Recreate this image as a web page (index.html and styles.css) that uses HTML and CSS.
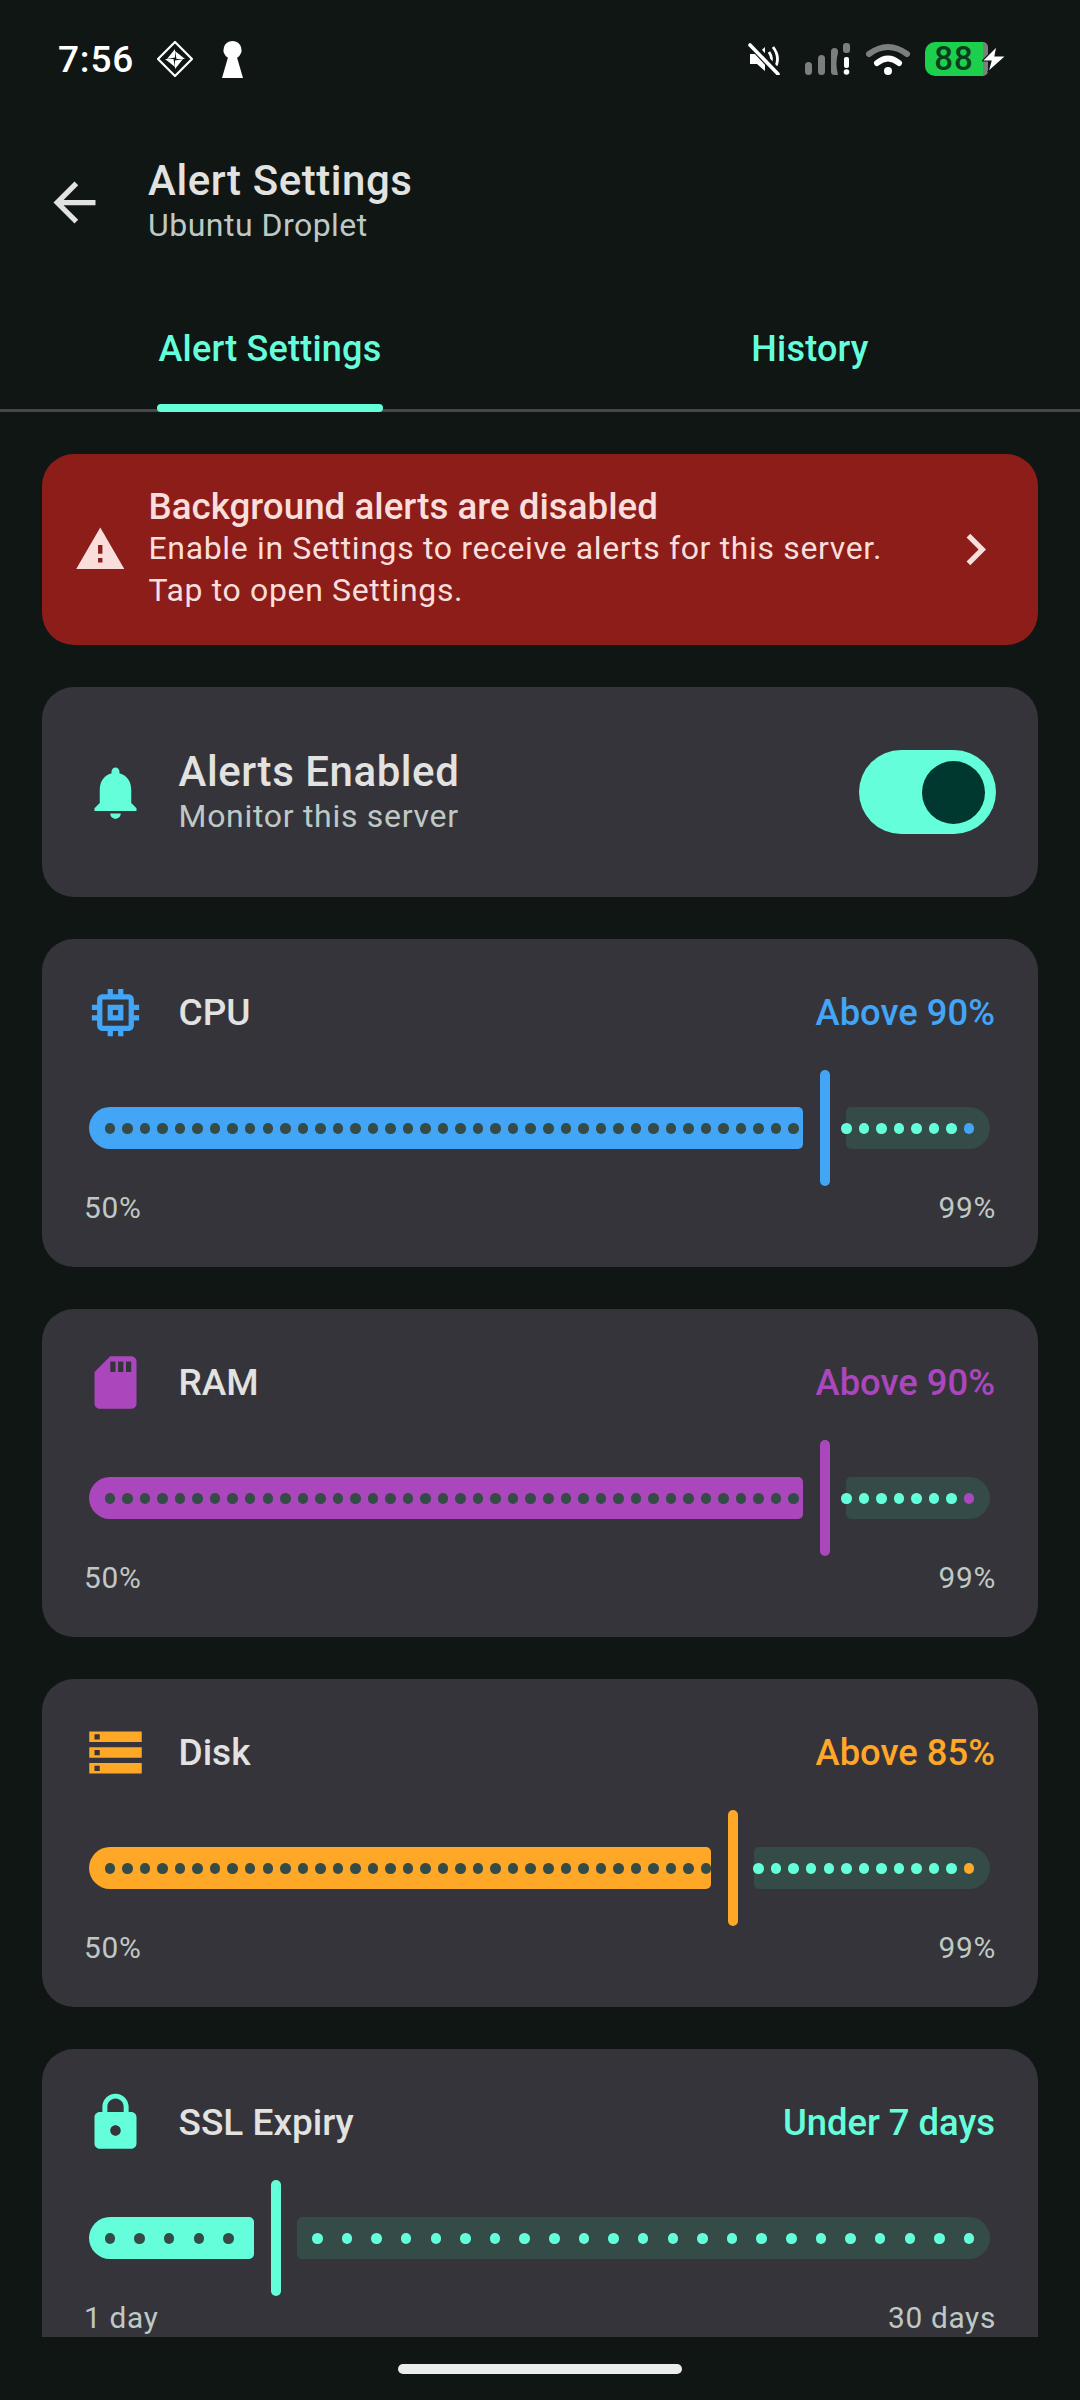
FILE: index.html
```html
<!DOCTYPE html>
<html lang="en">

<head>
    <meta charset="UTF-8">
    <meta name="viewport" content="width=device-width, initial-scale=1.0">
    <title>Alert Settings</title>
    <link rel="stylesheet" href="styles.css">
</head>

<body>
    <!-- Status bar -->
    <div class="status-bar">
        <div class="status-left">
            <span class="clock">7:56</span>
            <svg class="diamond-icon" viewBox="0 0 38 38">
                <path d="M19 2 36 19 19 36 2 19Z" fill="none" stroke="#fff" stroke-width="2.2" stroke-linejoin="round" />
                <path d="M19 9v8.5l-8 1.5zM29 19h-8.5l-1.5-8zM19 29v-8.5l8-1.5zM9 19h8.5l1.5 8z" fill="#fff" />
            </svg>
            <svg class="key-icon" viewBox="0 0 21 37">
                <path d="M10.5 0a9 9 0 0 1 4.6 16.7L21 37H0L5.9 16.7A9 9 0 0 1 10.5 0Z" fill="#fff" />
            </svg>
        </div>
        <div class="status-right">
            <svg class="mute-icon" viewBox="0 0 32 32">
                <path d="M2 11h7l8-7v24l-8-7H2z" fill="#fff" />
                <path d="M21 9q5 7 0 14M25 4q9 12 0 24" fill="none" stroke="#fff" stroke-width="2.8" />
                <path d="M2 0 31 31" stroke="#0f1614" stroke-width="8" />
                <path d="M2 2 30 31" stroke="#fff" stroke-width="3.6" stroke-linecap="round" />
            </svg>
            <svg class="signal-icon" viewBox="0 0 46 32">
                <rect x="0" y="19" width="7" height="13" rx="3.5" fill="#7b7f7e" />
                <rect x="13" y="12" width="7" height="20" rx="3.5" fill="#7b7f7e" />
                <path d="M26 8.5a3.5 3.5 0 0 1 7 0V10q-3 10 0 22h-3.5a3.5 3.5 0 0 1-3.5-3.5z" fill="#7b7f7e" />
                <rect x="38" y="0" width="7" height="10" rx="3" fill="#7b7f7e" />
                <rect x="39" y="14" width="5" height="11" rx="2" fill="#fff" />
                <circle cx="41.5" cy="29" r="2.8" fill="#fff" />
            </svg>
            <svg class="wifi-icon" viewBox="0 0 44 32">
                <path d="M3 11Q22-3 41 11" fill="none" stroke="#7b7f7e" stroke-width="6" stroke-linecap="round" />
                <path d="M11 20Q22 11 33 20" fill="none" stroke="#fff" stroke-width="6" stroke-linecap="round" />
                <circle cx="22" cy="28" r="4" fill="#fff" />
            </svg>
            <div class="battery">
                <span class="battery-level">88</span>
                <span class="battery-cap"></span>
                <svg class="bolt-icon" viewBox="0 0 24 26">
                    <path d="M15 0 0 15h9L6 26l18-16H13z" fill="#fff" stroke="#0f1614" stroke-width="1.2" />
                </svg>
            </div>
        </div>
    </div>

    <!-- Top bar -->
    <div class="app-bar">
        <svg class="back-icon" viewBox="0 0 24 24">
            <path d="M20 11H7.83l5.59-5.59L12 4l-8 8 8 8 1.41-1.41L7.83 13H20v-2z" />
        </svg>
        <div class="app-text">
            <div class="app-title">Alert Settings</div>
            <div class="app-subtitle">Ubuntu Droplet</div>
        </div>
    </div>

    <div class="tabs">
        <div class="tab"><span class="tab-label selected">Alert Settings</span></div>
        <div class="tab"><span class="tab-label">History</span></div>
    </div>

    <div class="content">
        <!-- Warning banner -->
        <div class="banner">
            <svg class="banner-icon" viewBox="0 0 24 24">
                <path d="M1 21h22L12 2 1 21zm12-3h-2v-2h2v2zm0-4h-2v-4h2v4z" />
            </svg>
            <div class="banner-text">
                <div class="banner-title">Background alerts are disabled</div>
                <div class="banner-body">Enable in Settings to receive alerts for this server.<br>Tap to open Settings.</div>
            </div>
            <svg class="chevron-icon" viewBox="0 0 24 24">
                <path d="M10 6L8.59 7.41 13.17 12l-4.58 4.59L10 18l6-6z" />
            </svg>
        </div>

        <!-- Master switch -->
        <div class="card switch-card teal">
            <svg class="card-icon" viewBox="0 0 24 24">
                <path d="M12 22c1.1 0 2-.9 2-2h-4c0 1.1.89 2 2 2zm6-6v-5c0-3.07-1.64-5.64-4.5-6.32V4c0-.83-.67-1.5-1.5-1.5s-1.5.67-1.5 1.5v.68C7.63 5.36 6 7.92 6 11v5l-2 2v1h16v-1l-2-2z" />
            </svg>
            <div class="switch-text">
                <div class="switch-title">Alerts Enabled</div>
                <div class="switch-sub">Monitor this server</div>
            </div>
            <div class="switch"><span class="switch-thumb"></span></div>
        </div>

        <!-- Thresholds -->
        <div class="card metric blue">
            <div class="metric-head">
                <svg class="card-icon" viewBox="0 0 24 24">
                    <path d="M15 9H9v6h6V9zm-2 4h-2v-2h2v2zm8-2V9h-2V7c0-1.1-.9-2-2-2h-2V3h-2v2h-2V3H9v2H7c-1.1 0-2 .9-2 2v2H3v2h2v2H3v2h2v2c0 1.1.9 2 2 2h2v2h2v-2h2v2h2v-2h2c1.1 0 2-.9 2-2v-2h2v-2h-2v-2h2zm-4 6H7V7h10v10z" />
                </svg>
                <span class="metric-name">CPU</span>
                <span class="metric-value">Above 90%</span>
            </div>
            <div class="slider" data-min="50" data-max="99" data-value="90"></div>
            <div class="range"><span>50%</span><span>99%</span></div>
        </div>

        <div class="card metric purple">
            <div class="metric-head">
                <svg class="card-icon" viewBox="0 0 24 24">
                    <path d="M18 2h-8L4.02 8 4 20c0 1.1.9 2 2 2h12c1.1 0 2-.9 2-2V4c0-1.1-.9-2-2-2zm-6 6h-2V4h2v4zm3 0h-2V4h2v4zm3 0h-2V4h2v4z" />
                </svg>
                <span class="metric-name">RAM</span>
                <span class="metric-value">Above 90%</span>
            </div>
            <div class="slider" data-min="50" data-max="99" data-value="90"></div>
            <div class="range"><span>50%</span><span>99%</span></div>
        </div>

        <div class="card metric orange">
            <div class="metric-head">
                <svg class="card-icon" viewBox="0 0 24 24">
                    <path d="M2 20h20v-4H2v4zm2-3h2v2H4v-2zM2 4v4h20V4H2zm4 3H4V5h2v2zm-4 7h20v-4H2v4zm2-3h2v2H4v-2z" />
                </svg>
                <span class="metric-name">Disk</span>
                <span class="metric-value">Above 85%</span>
            </div>
            <div class="slider" data-min="50" data-max="99" data-value="85"></div>
            <div class="range"><span>50%</span><span>99%</span></div>
        </div>

        <div class="card metric teal">
            <div class="metric-head">
                <svg class="card-icon" viewBox="0 0 24 24">
                    <path d="M18 8h-1V6c0-2.76-2.24-5-5-5S7 3.24 7 6v2H6c-1.1 0-2 .9-2 2v10c0 1.1.9 2 2 2h12c1.1 0 2-.9 2-2V10c0-1.1-.9-2-2-2zm-6 9c-1.1 0-2-.9-2-2s.9-2 2-2 2 .9 2 2-.9 2-2 2zm3.1-9H8.9V6c0-1.71 1.39-3.1 3.1-3.1 1.71 0 3.1 1.39 3.1 3.1v2z" />
                </svg>
                <span class="metric-name">SSL Expiry</span>
                <span class="metric-value">Under 7 days</span>
            </div>
            <div class="slider" data-min="1" data-max="30" data-value="7"></div>
            <div class="range"><span>1 day</span><span>30 days</span></div>
        </div>
    </div>

    <div class="home-area"><span class="home-bar"></span></div>

    <script src="slider.js"></script>
</body>

</html>
```
FILE: styles.css
```css
/* General Styles */
* {
    box-sizing: border-box;
}

body {
    font-family: Roboto, 'Noto Sans', sans-serif;
    background: #0f1614;
    color: #e2e3e0;
    margin: 0;
    width: 1080px;
    height: 2400px;
    overflow: hidden;
    display: flex;
    flex-direction: column;
}

/* Status bar */
.status-bar {
    height: 118px;
    flex: none;
    display: flex;
    justify-content: space-between;
    align-items: center;
    padding: 0 92px 0 58px;
    color: #fff;
}

.status-left,
.status-right {
    display: flex;
    align-items: center;
}

.clock {
    font-size: 37px;
    font-weight: 500;
    letter-spacing: 0.8px;
    width: 98px;
}

.diamond-icon {
    width: 38px;
    height: 38px;
    margin-right: 28px;
}

.key-icon {
    width: 21px;
    height: 37px;
}

.mute-icon {
    width: 32px;
    height: 32px;
    margin-right: 25px;
}

.signal-icon {
    width: 46px;
    height: 32px;
    margin-right: 15px;
}

.wifi-icon {
    width: 44px;
    height: 32px;
    margin-right: 15px;
}

.battery {
    display: flex;
    align-items: center;
    position: relative;
}

.battery-level {
    width: 58px;
    height: 34px;
    background: #1ccf4c;
    border-radius: 10px 0 0 10px;
    color: #0b3d1c;
    font-size: 33px;
    font-weight: 500;
    line-height: 34px;
    text-align: center;
    letter-spacing: 1px;
}

.battery-cap {
    width: 5px;
    height: 34px;
    background: #7b7f7e;
    border-radius: 0 8px 8px 0;
}

.bolt-icon {
    position: absolute;
    left: 57px;
    top: 4px;
    width: 24px;
    height: 26px;
}

/* Top bar */
.app-bar {
    height: 168px;
    flex: none;
    display: flex;
    align-items: center;
    gap: 42px;
    padding: 0 0 0 43px;
}

.back-icon {
    width: 63px;
    height: 63px;
    fill: #e2e3e0;
}

.app-text {
    padding-bottom: 7px;
}

.app-title {
    font-size: 42px;
    font-weight: 500;
    letter-spacing: 0.55px;
    line-height: 52px;
}

.app-subtitle {
    font-size: 32px;
    color: #bec9c5;
    letter-spacing: 0.48px;
    line-height: 36px;
}

/* Tabs */
.tabs {
    height: 126px;
    flex: none;
    display: flex;
    border-bottom: 3px solid #49454f;
}

.tab {
    flex: 1;
    display: flex;
    justify-content: center;
    align-items: center;
    padding-top: 3px;
}

.tab-label {
    position: relative;
    height: 100%;
    display: flex;
    align-items: center;
    padding: 0 2px;
    font-size: 36px;
    font-weight: 500;
    letter-spacing: 0.2px;
    color: #64ffda;
}

.tab-label.selected::after {
    content: "";
    position: absolute;
    left: 0;
    right: 0;
    bottom: -3px;
    height: 8px;
    border-radius: 4px;
    background: #64ffda;
}

/* Cards */
.content {
    height: 1925px;
    flex: none;
    overflow: hidden;
    display: flex;
    flex-direction: column;
    gap: 42px;
    padding: 42px 42px 0;
}

.banner {
    flex: none;
    height: 191px;
    display: flex;
    align-items: center;
    padding: 0 31.5px;
    background: #8c1d18;
    border-radius: 32px;
    color: #f9dedc;
}

.banner-icon {
    width: 52.5px;
    height: 52.5px;
    flex: none;
    fill: #f9dedc;
    margin-right: 22.5px;
}

.banner-text {
    flex: 1;
    padding-bottom: 1px;
}

.banner-title {
    font-size: 36.75px;
    font-weight: 500;
    line-height: 40px;
}

.banner-body {
    font-size: 32px;
    letter-spacing: 0.65px;
    line-height: 42px;
}

.chevron-icon {
    width: 63px;
    height: 63px;
    flex: none;
    fill: #f9dedc;
}

.card {
    flex: none;
    background: #36343b;
    border-radius: 32px;
    padding: 42px;
}

.card-icon {
    width: 63px;
    height: 63px;
    flex: none;
    fill: var(--tone);
}

.switch-card {
    height: 210px;
    display: flex;
    align-items: center;
    padding: 0 42px;
}

.switch-text {
    flex: 1;
    margin-left: 31.5px;
}

.switch-title {
    font-size: 42px;
    font-weight: 500;
    letter-spacing: 0.55px;
    line-height: 48px;
}

.switch-sub {
    font-size: 32px;
    color: #bec9c5;
    letter-spacing: 0.7px;
    line-height: 40px;
}

.switch {
    width: 137px;
    height: 84px;
    border-radius: 42px;
    background: #64ffda;
    display: flex;
    align-items: center;
    justify-content: flex-end;
    padding-right: 11px;
}

.switch-thumb {
    width: 63px;
    height: 63px;
    border-radius: 50%;
    background: #00382f;
}

/* Metric colours */
.blue {
    --tone: #42a5f5;
}

.purple {
    --tone: #ab47bc;
}

.orange {
    --tone: #ffa726;
}

.teal {
    --tone: #64ffda;
}

.metric {
    height: 328px;
}

.metric-head {
    display: flex;
    align-items: center;
    height: 63px;
}

.metric-name {
    flex: 1;
    margin-left: 31.5px;
    font-size: 37px;
    font-weight: 500;
}

.metric-value {
    font-size: 36.4px;
    font-weight: 500;
    margin-right: 1px;
    color: var(--tone);
}

/* Slider, filled in by slider.js */
.slider {
    position: relative;
    height: 126px;
    margin-top: 21px;
    padding: 0 6px 0 5.25px;
    display: flex;
    align-items: center;
}

.slider-active,
.slider-rest {
    height: 42px;
}

.slider-active {
    flex: none;
    background: var(--tone);
    border-radius: 21px 5px 5px 21px;
}

.slider-rest {
    flex: 1;
    background: #354b47;
    border-radius: 5px 21px 21px 5px;
}

.slider-thumb {
    flex: none;
    width: 10.5px;
    height: 116px;
    margin: 0 15.75px 0 16.75px;
    border-radius: 5.25px;
    background: var(--tone);
}

.slider-dot {
    position: absolute;
    top: 58px;
    width: 10.5px;
    height: 10.5px;
    margin-left: -5.25px;
    border-radius: 50%;
    background: #64ffda;
}

.slider-dot.on {
    background: #354b47;
}

.slider-dot.end {
    background: var(--tone);
}

.range {
    display: flex;
    justify-content: space-between;
    font-size: 29.8px;
    line-height: 34px;
    letter-spacing: 0.7px;
    color: #bec9c5;
}

/* Gesture bar */
.home-area {
    flex: 1;
    display: flex;
    justify-content: center;
    padding-top: 27px;
}

.home-bar {
    width: 284px;
    height: 10px;
    border-radius: 5px;
    background: #ececec;
}
```
FILE: slider.js
```js
// builds the tick dots and track segments of each threshold slider
const TRACK_INSET = 5.25;
const TRACK_WIDTH = 901.5;
const FIRST_DOT = 26;
const DOTS_WIDTH = 859;

document.querySelectorAll('.slider').forEach(slider => {
    const min = Number(slider.dataset.min);
    const max = Number(slider.dataset.max);
    const value = Number(slider.dataset.value);
    const steps = max - min;

    const thumbAt = TRACK_INSET + (value - min) / steps * TRACK_WIDTH;
    const activeEnd = thumbAt - 22;
    const restStart = thumbAt + 21;

    const active = document.createElement('div');
    active.className = 'slider-active';
    active.style.width = (activeEnd - TRACK_INSET) + 'px';

    const thumb = document.createElement('div');
    thumb.className = 'slider-thumb';

    const rest = document.createElement('div');
    rest.className = 'slider-rest';

    slider.append(active, thumb, rest);

    for (let i = 0; i <= steps; i++) {
        const x = FIRST_DOT + i * DOTS_WIDTH / steps;
        // no dots in the gap around the thumb
        if (x > activeEnd && x < restStart - 1) continue;

        const dot = document.createElement('span');
        dot.className = 'slider-dot';
        if (x <= activeEnd) dot.classList.add('on');
        if (i === steps) dot.classList.add('end');
        dot.style.left = x + 'px';
        slider.append(dot);
    }
});
```
